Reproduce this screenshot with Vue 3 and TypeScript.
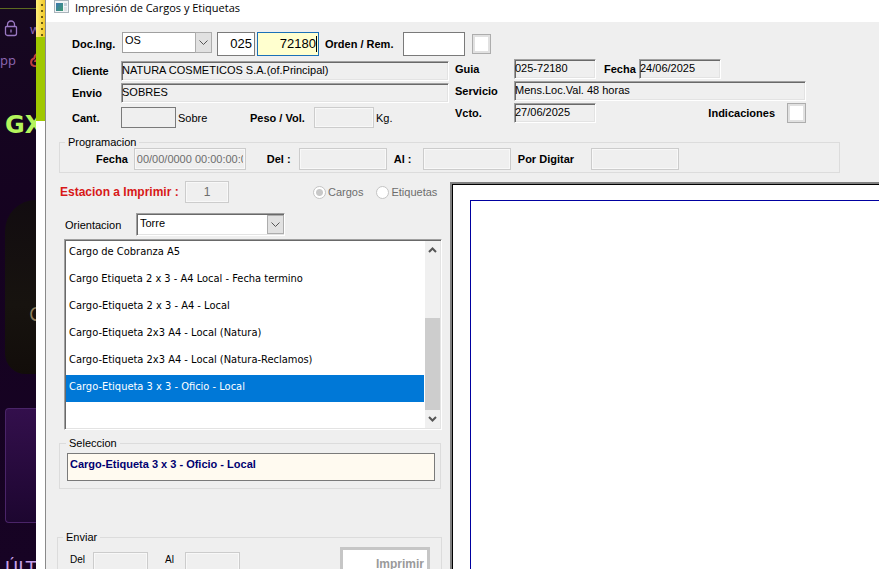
<script setup lang="ts">
import { ref, computed } from 'vue'

const docType = ref('OS')
const series = ref('025')
const docNumber = ref('72180')
const orientation = ref('Torre')
const output = ref('cargos')

const formats: string[] = [
  'Cargo de Cobranza A5',
  'Cargo Etiqueta 2 x 3 - A4 Local - Fecha termino',
  'Cargo-Etiqueta 2 x 3 - A4 - Local',
  'Cargo-Etiqueta 2x3 A4 - Local (Natura)',
  'Cargo-Etiqueta 2x3 A4 - Local (Natura-Reclamos)',
  'Cargo-Etiqueta 3 x 3 - Oficio - Local',
]
const selected = ref(5)
const selectedName = computed(() => formats[selected.value])

function move(step: number): void {
  selected.value = Math.min(formats.length - 1, Math.max(0, selected.value + step))
}
</script>

<template>
  <div class="desktop">
    <aside class="browser">
      <div class="tabline"></div>
      <div class="address">
        <svg class="lock" viewBox="0 0 14 17" width="14" height="17">
          <path d="M3.5 6V4.5a3.5 3.5 0 0 1 7 0V6M2.5 6.5h9a1 1 0 0 1 1 1v6a2 2 0 0 1-2 2h-7a2 2 0 0 1-2-2v-6a1 1 0 0 1 1-1zM7 9.500v3" />
        </svg>
        <span>w</span>
      </div>
      <div class="bookmarks">
        <span>pp</span>
        <svg viewBox="0 0 14 14" width="14" height="14">
          <path d="M10 2C6 0 4 3 5 5M5 5C0 6 0 12 4 13c4 1 6-2 5-5C8 6 5 7 5 9" />
        </svg>
      </div>
      <div class="brand">GX</div>
      <div class="cover"><span>C</span></div>
      <div class="tile"></div>
      <div class="news">ÚLT</div>
    </aside>
    <div class="gutter">
      <div class="dots"></div>
      <div class="green"></div>
    </div>

    <main class="window">
      <header class="titlebar">
        <svg viewBox="0 0 15 13" width="15" height="13">
          <defs>
            <linearGradient id="appicon" x1="0" y1="0" x2="1" y2="1">
              <stop offset="0" stop-color="#3d78b0" />
              <stop offset="1" stop-color="#3d9a70" />
            </linearGradient>
          </defs>
          <rect x="0.5" y="0.5" width="14" height="12" fill="#f2f4f6" stroke="#a9b4bb" />
          <rect x="2" y="3" width="7" height="8" fill="url(#appicon)" />
          <rect x="10" y="3" width="3" height="3" fill="#c3d0d8" />
          <rect x="10" y="7" width="3" height="4" fill="#dde3e7" />
        </svg>
        <h1>Impresión de Cargos y Etiquetas</h1>
      </header>

      <form class="body" @submit.prevent>
        <div class="docrow">
          <label class="b lead" for="doc">Doc.Ing.</label>
          <div class="combo flatcombo">
            <select id="doc" v-model="docType"><option>OS</option></select>
            <span class="arrow"><svg viewBox="0 0 9 6" width="9" height="6"><path d="M0.500 0.500l4 4 4-4" /></svg></span>
          </div>
          <input v-model="series" class="flat num series" type="text" aria-label="Serie" />
          <div class="active">
            <input v-model="docNumber" class="flat num" type="text" aria-label="Número" />
          </div>
          <label class="b orden" for="orden">Orden / Rem.</label>
          <input id="orden" class="flat rem" type="text" />
          <input class="check" type="checkbox" aria-label="Orden" />
        </div>

        <div class="details">
          <div class="left">
            <div class="line">
              <label class="b lead" for="cliente">Cliente</label>
              <input id="cliente" class="sunken grow" type="text" readonly value="NATURA COSMETICOS S.A.(of.Principal)" />
            </div>
            <div class="line">
              <label class="b lead" for="envio">Envio</label>
              <input id="envio" class="sunken grow" type="text" readonly value="SOBRES" />
            </div>
            <div class="line amounts">
              <label class="b lead" for="cant">Cant.</label>
              <input id="cant" class="flat gray cant" type="text" />
              <span class="unit">Sobre</span>
              <label class="b peso" for="peso">Peso / Vol.</label>
              <input id="peso" class="off w60" type="text" disabled />
              <span class="unit">Kg.</span>
            </div>
          </div>
          <div class="right">
            <div class="line">
              <label class="b tag" for="guia">Guia</label>
              <input id="guia" class="sunken w82" type="text" readonly value="025-72180" />
              <label class="b fecha" for="fecha">Fecha</label>
              <input id="fecha" class="sunken w82" type="text" readonly value="24/06/2025" />
            </div>
            <div class="line">
              <label class="b tag" for="servicio">Servicio</label>
              <input id="servicio" class="sunken grow" type="text" readonly value="Mens.Loc.Val. 48 horas" />
            </div>
            <div class="line">
              <label class="b tag" for="vcto">Vcto.</label>
              <input id="vcto" class="sunken w82" type="text" readonly value="27/06/2025" />
              <label class="b indic" for="indic">Indicaciones</label>
              <input id="indic" class="check" type="checkbox" />
            </div>
          </div>
        </div>

        <fieldset class="prog">
          <legend>Programacion</legend>
          <label class="b" for="pfecha">Fecha</label>
          <input id="pfecha" class="off date" type="text" disabled value="00/00/0000 00:00:00:00" />
          <label class="b del" for="pdel">Del :</label>
          <input id="pdel" class="off w88" type="text" disabled />
          <label class="b al" for="pal">Al :</label>
          <input id="pal" class="off w88" type="text" disabled />
          <label class="b digitar" for="pdig">Por Digitar</label>
          <input id="pdig" class="off w88" type="text" disabled />
        </fieldset>

        <div class="work">
          <section class="panel">
            <div class="station">
              <label class="red" for="estacion">Estacion a Imprimir :</label>
              <input id="estacion" class="off" type="text" disabled value="1" />
              <label class="radio first"><input v-model="output" type="radio" name="output" value="cargos" disabled />Cargos</label>
              <label class="radio"><input v-model="output" type="radio" name="output" value="etiquetas" disabled />Etiquetas</label>
            </div>
            <div class="orient">
              <label for="orient">Orientacion</label>
              <div class="combo sunkcombo">
                <select id="orient" v-model="orientation"><option>Torre</option></select>
                <span class="arrow"><svg viewBox="0 0 9 6" width="9" height="6"><path d="M0.500 0.500l4 4 4-4" /></svg></span>
              </div>
            </div>

            <div class="list">
              <ul role="listbox" aria-label="Formatos">
                <li v-for="(name, i) in formats" :key="name" role="presentation">
                  <button type="button" role="option" :aria-selected="i === selected" :class="{ on: i === selected }" @click="selected = i">{{ name }}</button>
                </li>
              </ul>
              <div class="scroll">
                <button type="button" aria-label="Subir" @click="move(-1)"><svg viewBox="0 0 9 6" width="9" height="6"><path d="M1 5l3.500-3.500L8 5" /></svg></button>
                <div class="thumb"></div>
                <button type="button" aria-label="Bajar" @click="move(1)"><svg viewBox="0 0 9 6" width="9" height="6"><path d="M1 1l3.500 3.500L8 1" /></svg></button>
              </div>
            </div>

            <fieldset class="choice">
              <legend>Seleccion</legend>
              <input type="text" readonly :value="selectedName" aria-label="Seleccion" />
            </fieldset>

            <fieldset class="send">
              <legend>Enviar</legend>
              <label for="sdel">Del</label>
              <input id="sdel" class="off" type="text" disabled />
              <label for="sal">Al</label>
              <input id="sal" class="off" type="text" disabled />
              <button class="print" type="button" disabled><u>I</u>mprimir</button>
            </fieldset>
          </section>
          <section class="preview"><div class="sheet"></div></section>
        </div>
      </form>
    </main>
  </div>
</template>

<style>
body {
  overflow: hidden;
}
</style>

<style scoped>
* {
  box-sizing: border-box;
}
.desktop {
  display: grid;
  grid-template-columns: 36px 9px minmax(0, 1fr);
  height: 100vh;
  overflow: hidden;
  font: 11px/14px "Liberation Sans", Arial, sans-serif;
  color: #000;
}
input,
select,
button {
  font: inherit;
  color: inherit;
  margin: 0;
  padding: 0;
  border-radius: 0;
  outline: none;
  appearance: none;
  min-width: 0;
}

/* browser behind the window */
.browser {
  background: linear-gradient(#160820, #150220 40%, #170324);
  overflow: hidden;
  white-space: nowrap;
  color: #8f68b4;
  font-family: "Open Sans", sans-serif;
}
.tabline {
  height: 9px;
  border-bottom: 1px solid #5c6a20;
}
.address {
  display: flex;
  align-items: center;
  gap: 12px;
  padding-left: 4px;
  margin-top: 11px;
  height: 17px;
  font-size: 13px;
}
.address svg,
.bookmarks svg {
  flex: none;
  fill: none;
  stroke: #9a78c2;
  stroke-width: 1.3;
}
.bookmarks {
  display: flex;
  align-items: center;
  gap: 14px;
  margin-top: 16px;
  height: 14px;
  font-size: 13px;
}
.bookmarks svg {
  stroke: #c0403c;
  stroke-width: 2;
}
.brand {
  margin-top: 42px;
  padding-left: 5px;
  font: 700 24px/32px "DejaVu Sans", sans-serif;
  color: #b4f55c;
}
.cover {
  display: flex;
  align-items: flex-end;
  justify-content: flex-end;
  height: 174px;
  margin: 59px 0 0 5px;
  padding-bottom: 46px;
  border-radius: 36px 0 0 24px;
  background: linear-gradient(#120c10, #17130f 60%, #120d0a);
  overflow: hidden;
}
.cover span {
  width: 7px;
  font: 20px/28px "Open Sans", sans-serif;
  color: #8d7d5c;
}
.tile {
  height: 115px;
  margin: 34px 0 0 5px;
  border: 1px solid #4a2468;
  border-right: 0;
  border-radius: 4px 0 0 4px;
  background: linear-gradient(#330f4c, #1d0630);
}
.news {
  margin-top: 32px;
  padding-left: 5px;
  font: 18px/26px "DejaVu Sans", sans-serif;
  color: #c6a0ea;
}
.gutter {
  background: #fff;
}
.dots {
  height: 37px;
  background: radial-gradient(circle at 6px 5px, #6b5a10 1px, transparent 1px) 0 0 / 9px 6px,
    linear-gradient(90deg, #fff07a, #f0c828);
}
.green {
  height: 84px;
  background: #a0c800;
}

/* window */
.window {
  display: flex;
  flex-direction: column;
  border-left: 1px solid #8a8a8a;
  background: #efefef;
  overflow: hidden;
}
.titlebar {
  flex: none;
  display: flex;
  align-items: flex-start;
  gap: 6px;
  height: 22px;
  padding-left: 8px;
  background: #fff;
}
h1 {
  margin: 0;
  font: 400 11px/15px "Open Sans", "Noto Sans", sans-serif;
}
.body {
  flex: 1;
  display: flex;
  flex-direction: column;
  padding-top: 10px;
  min-height: 0;
}
.b {
  font-weight: 700;
  white-space: nowrap;
}
.lead {
  flex: none;
  width: 75px;
  padding-left: 26px;
}
.docrow {
  flex: none;
  display: flex;
  align-items: center;
  height: 24px;
}
.line {
  display: flex;
  align-items: center;
}
.flat {
  height: 24px;
  border: 1px solid #7a7a7a;
  background: #fff;
}
.num {
  padding: 0 2px 2px 0;
  text-align: right;
  font-size: 13px;
}
.series {
  width: 38px;
  margin: 0 2px 0 5px;
}
.active {
  display: grid;
  width: 62px;
}
.active > *,
.active::after {
  grid-area: 1 / 1;
}
.active .num {
  width: 62px;
  border-color: #1a70b8;
  background: #ffffcf;
}
.active::after {
  content: "";
  justify-self: end;
  align-self: center;
  width: 1px;
  height: 16px;
  margin-right: 2px;
  background: #000;
}
.orden {
  width: 84px;
  padding-left: 6px;
}
.rem {
  width: 62px;
  margin-right: 7px;
}
.check {
  flex: none;
  width: 19px;
  height: 20px;
  border: 1px solid #adadad;
  background: #fff;
  box-shadow: inset 0 0 0 2px #e1e1e1;
}
.check:checked {
  background: #333;
}
.combo {
  display: grid;
}
.combo > * {
  grid-area: 1 / 1;
}
.combo select {
  width: 100%;
  background: #fff;
  border: 1px solid #a0a0a0;
}
.arrow {
  justify-self: end;
  display: grid;
  place-items: center;
  width: 17px;
  background: #e1e1e1;
  border: 1px solid #adadad;
  pointer-events: none;
}
.arrow svg,
.scroll svg {
  fill: none;
  stroke: #555;
}
.flatcombo {
  width: 90px;
  height: 21px;
  margin-left: 1px;
  align-self: flex-start;
}
.flatcombo select {
  padding: 0 0 5px 2px;
}
.sunken {
  height: 20px;
  padding: 0 0 2px;
  border: 1px solid #a0a0a0;
  border-right-color: #fff;
  border-bottom-color: #fff;
  background: #efefef;
  box-shadow: inset 1px 1px #696969, inset -1px -1px #e3e3e3;
}
.grow {
  flex: 1;
}
.gray {
  background: #efefef;
}
.off {
  height: 22px;
  border: 1px solid #ccc;
  background: #efefef;
  box-shadow: inset 0 0 0 1px #f8f8f8;
  color: #6d6d6d;
}
.w60 {
  width: 60px;
}
.w82 {
  width: 82px;
}
.w88 {
  width: 88px;
}
.details {
  flex: none;
  display: grid;
  grid-template-columns: 403px minmax(0, 351px);
  gap: 6px;
  padding-top: 3px;
}
.left,
.right {
  display: flex;
  flex-direction: column;
  gap: 2px;
}
.left {
  padding-top: 2px;
}
.amounts {
  padding-top: 2px;
}
.amounts .flat,
.amounts .off {
  height: 21px;
}
.cant {
  width: 55px;
}
.unit {
  margin-left: 2px;
  width: 32px;
}
.peso {
  margin-left: 40px;
  width: 64px;
}
.tag {
  flex: none;
  width: 59px;
}
.fecha {
  width: 43px;
  padding-left: 8px;
}
.indic {
  margin-left: auto;
  padding-right: 12px;
}
fieldset {
  min-width: 0;
  margin: 0;
  padding: 0;
  border: 1px solid #dcdcdc;
}
legend {
  margin-left: 6px;
  padding: 0 3px;
  line-height: 12px;
}
.prog {
  flex: none;
  margin: 8px 39px 0 13px;
  display: flex;
  align-items: center;
  height: 37px;
  padding: 0 0 2px 36px;
}
.prog legend {
  margin-left: -31px;
}
.date {
  width: 112px;
  margin-left: 6px;
  padding: 0 2px;
}
.del {
  margin-left: 21px;
  width: 32px;
}
.al {
  width: 36px;
  padding-left: 7px;
}
.digitar {
  width: 80px;
  padding-left: 7px;
}

.work {
  flex: 1;
  display: grid;
  grid-template-columns: 404px minmax(0, 1fr);
  margin-top: 8px;
  min-height: 0;
}
.station {
  display: flex;
  align-items: center;
  height: 22px;
  padding-left: 14px;
}
.red {
  width: 125px;
  font-size: 12px;
  font-weight: 700;
  color: #d81818;
}
.station .off {
  width: 44px;
  text-align: center;
  font-size: 12px;
}
.radio {
  display: flex;
  align-items: center;
  gap: 2px;
  color: #6d6d6d;
}
.radio.first {
  margin: 0 13px 0 84px;
}
.radio input {
  width: 13px;
  height: 13px;
  border: 1px solid #c4c4c4;
  border-radius: 50%;
  background: #fff;
}
.radio input:checked {
  background: radial-gradient(circle, #c8c8c8 3px, #fff 4px);
}
.orient {
  display: flex;
  align-items: center;
  padding-left: 19px;
  margin-top: 10px;
}
.orient label {
  width: 71px;
}
.sunkcombo {
  width: 149px;
  height: 23px;
}
.sunkcombo select {
  padding: 0 0 4px 3px;
  border-right-color: #fff;
  border-bottom-color: #fff;
  box-shadow: inset 1px 1px #696969, inset -1px -1px #e3e3e3;
}
.sunkcombo .arrow {
  margin: 2px 1px 2px 0;
}
.list {
  display: flex;
  height: 191px;
  margin: 3px 8px 0 18px;
  padding-left: 1px;
  border: 1px solid #a0a0a0;
  border-right-color: #fff;
  border-bottom-color: #fff;
  background: #fff;
  box-shadow: inset 1px 1px #696969, inset -1px -1px #e3e3e3;
  font-family: "DejaVu Sans Condensed", "DejaVu Sans", sans-serif;
}
.list ul {
  flex: 1;
  margin: 0;
  padding: 0;
  list-style: none;
}
.list li button {
  display: block;
  width: 100%;
  height: 27px;
  padding: 0 0 3px 3px;
  border: 0;
  background: none;
  text-align: left;
  white-space: nowrap;
}
.list li button.on {
  background: #0078d7;
  color: #fff;
}
.scroll {
  display: flex;
  flex-direction: column;
  width: 15px;
  margin: 1px;
  background: #f0f0f0;
}
.scroll button {
  display: grid;
  place-items: center;
  height: 18px;
  border: 0;
  background: none;
}
.scroll svg {
  stroke-width: 2;
}
.thumb {
  height: 92px;
  margin-top: auto;
  background: #cdcdcd;
}
.choice {
  height: 52px;
  margin: 7px 9px 0 13px;
  padding: 4px 5px 0 7px;
}
.choice legend {
  margin-left: -1px;
}
.choice input {
  display: block;
  width: 100%;
  height: 28px;
  padding: 0 0 7px 2px;
  border: 1px solid #7a7a7a;
  background: #fffaf0;
  color: #000070;
  font-weight: 700;
}
.send {
  display: flex;
  align-items: flex-start;
  height: 60px;
  margin: 42px 8px 0 11px;
  padding: 4px 11px 0 12px;
}
.send legend {
  margin-left: -7px;
}
.send label {
  width: 23px;
  padding-top: 6px;
  font-size: 10px;
}
.send .off {
  width: 55px;
  margin: 5px 17px 0 0;
}
.send label + .off + label {
  width: 20px;
}
.print {
  width: 90px;
  height: 34px;
  margin-left: auto;
  padding-right: 3px;
  border: 3px solid #c6c6c6;
  background: #fff;
  color: #9a9a9a;
  font-size: 12px;
  font-weight: 700;
  text-align: right;
}
.preview {
  margin-top: 1px;
  padding: 16px 0 0 16px;
  border-top: 2px solid #808080;
  border-left: 2px solid #808080;
  background: #fff;
  box-shadow: inset 1px 1px #000;
  overflow: hidden;
}
.sheet {
  height: 100%;
  margin-left: 2px;
  border-top: 1px solid #0000a0;
  border-left: 1px solid #0000a0;
}
</style>
